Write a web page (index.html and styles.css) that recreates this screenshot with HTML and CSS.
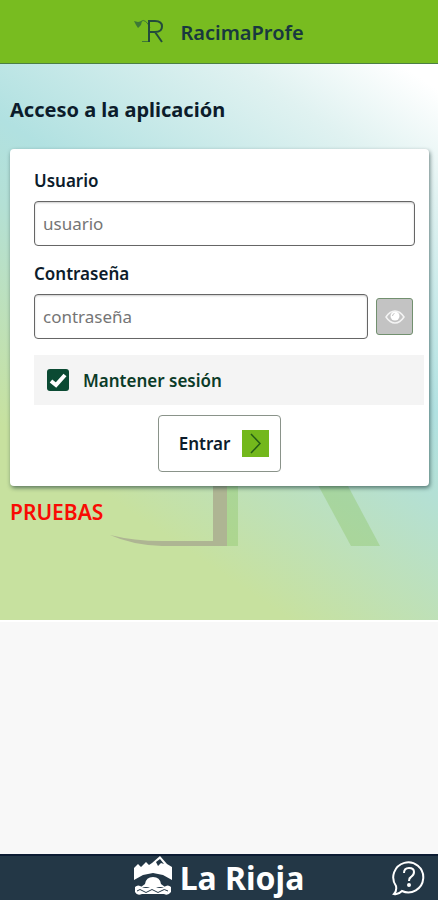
FILE: index.html
```html
<!DOCTYPE html>
<html lang="es">
<head>
    <meta charset="utf-8" />
    <meta name="viewport" content="width=device-width, initial-scale=1" />
    <title>RacimaProfe</title>
    <link rel="stylesheet" href="styles.css">
</head>
<body>
    <header class="top-bar">
        <svg class="logo" viewBox="0 0 30 24" aria-hidden="true">
            <path class="logo-leaf" d="M0 2L4 3L8 2L7 6L4 9L2 6z" />
            <path class="logo-stem" d="M5 5Q9 -2 14 5L16 9M8 22.500H16" />
            <path class="logo-letter" d="M15 23V2H21Q28 2 28 7.500Q28 13 21 13H15M21 13L28 23" />
        </svg>
        <span class="app-name">RacimaProfe</span>
    </header>

    <main class="login">
        <svg class="watermark" viewBox="0 0 270 200" aria-hidden="true">
            <path class="mark-shadow" d="M117 0H128V200H117z M160 50H190L270 200H241z" />
            <path class="mark-stroke" d="M103 0H117V200H52Q22 199 0 189Q24 195 52 195H103z" />
        </svg>
        <h1>Acceso a la aplicación</h1>
        <form class="card">
            <label class="field-label" for="usuario">Usuario</label>
            <div class="field">
                <input class="text-box" type="text" id="usuario" placeholder="usuario" />
            </div>
            <label class="field-label" for="clave">Contraseña</label>
            <div class="field">
                <input class="text-box" type="password" id="clave" placeholder="contraseña" />
                <button class="show-button" type="button" aria-label="Mostrar contraseña">
                    <svg viewBox="0 0 20 14" aria-hidden="true">
                        <path d="M1 7Q5 1 10 1Q15 1 19 7Q15 13 10 13Q5 13 1 7z" fill="none" stroke="#f4f4f4" stroke-width="1.500" />
                        <circle cx="10" cy="6" r="4.500" fill="#fff" />
                        <path d="M7.500 6Q7.500 4 9.500 3.500" fill="none" stroke="#c3c3c3" />
                    </svg>
                </button>
            </div>
            <label class="keep">
                <input type="checkbox" checked />
                <span>Mantener sesión</span>
            </label>
            <button class="enter-button" type="submit">
                <span>Entrar</span>
                <svg viewBox="0 0 27 27" aria-hidden="true">
                    <path d="M0 0H27V27H0z" fill="#73b81c" />
                    <path d="M9 4L18 13.500L9 23" fill="none" stroke="#245c16" stroke-width="1.500" />
                </svg>
            </button>
        </form>
        <p class="environment">PRUEBAS</p>
    </main>

    <footer class="bottom-bar">
        <div class="brand">
            <svg viewBox="0 0 38 40" aria-hidden="true">
                <path d="M0 12L4 8L7 11L12 6L15 9L18 7L26 0L33 8L38 11V24L29 19L19 17L9 19L0 24z" fill="#fff" />
                <path d="M22 6L26 3L30 8L27 7L24 10z" fill="#233746" />
                <path d="M11 28Q12 21 19 21Q26 21 27 28L31 31H7z" fill="#fff" />
                <path d="M1 31Q4 28 8 31Q12 33 16 31Q19 29 22 31Q26 33 30 31Q34 28 37 31V36Q34 40 30 38H8Q3 40 1 36z" fill="#fff" />
                <path d="M3 35Q6 32 9 35T15 35T21 35T27 35T34 35" fill="none" stroke="#233746" />
            </svg>
            <span>La Rioja</span>
        </div>
        <a class="help" href="#" aria-label="Ayuda">
            <svg viewBox="0 0 36 36" aria-hidden="true">
                <path d="M5 26A15 15 0 1 1 11 31Q7 35 3 34Q6 31 5 26z" />
                <path d="M13 13Q13 8 18 8Q23 8 23 12Q23 15 20 17Q18 18 18 21" />
                <circle cx="18" cy="25" r="1" />
            </svg>
        </a>
    </footer>
</body>
</html>
```
FILE: styles.css
```css
* {
    box-sizing: border-box;
}

body {
    display: flex;
    flex-direction: column;
    min-height: 100vh;
    margin: 0;
    background-color: #f8f8f8;
    color: #0c1c2b;
    font-family: "Noto Sans", sans-serif;
    font-size: 17px;
    font-weight: 600;
}

button,
input {
    font: inherit;
    color: inherit;
}

.top-bar {
    display: flex;
    align-items: center;
    justify-content: center;
    gap: 16px;
    height: 64px;
    padding-top: 2px;
    border-bottom: 1px solid #4c7f45;
    background-color: #78bc20;
}

.logo {
    width: 30px;
    height: 24px;
    margin-bottom: 4px;
}

.logo path {
    fill: none;
    stroke: #234b3c;
}

.logo .logo-leaf {
    fill: #3d7836;
    stroke: none;
}

.logo .logo-stem {
    stroke: #3d7836;
}

.logo .logo-letter {
    stroke-width: 2;
}

.app-name {
    color: #18383f;
    font-size: 20px;
    line-height: 28px;
}

.login {
    position: relative;
    padding: 32px 9px 92px 10px;
    border-bottom: 2px solid #fff;
    background-image: linear-gradient(34deg, #c7e19f 0%, #c7e19f 23%, #b4e0d5 49%, #b1e1e1 59%, #e0f2f1 84%, #fff 97%);
}

.watermark {
    position: absolute;
    bottom: 74px;
    left: 25%;
    width: 270px;
    height: 200px;
}

.mark-shadow {
    fill: #8cc66a;
    opacity: 0.4;
}

.mark-stroke {
    fill: #aeb593;
}

h1 {
    margin: 0 0 25px;
    font-size: 20px;
    font-weight: 700;
    line-height: 28px;
}

.card {
    position: relative;
    display: flex;
    flex-direction: column;
    padding: 20px 5px 14px 24px;
    border-radius: 4px;
    background-color: #fff;
    box-shadow: 1px 2px 4px rgba(20, 50, 50, 0.6);
}

.field-label {
    line-height: 24px;
}

.field {
    display: flex;
    align-items: center;
    gap: 8px;
    margin: 8px 9px 16px 0;
}

.text-box {
    flex: 1;
    min-width: 0;
    height: 45px;
    padding: 0 8px;
    border: 1px solid #666;
    border-radius: 4px;
    background-color: #fff;
    font-weight: 400;
    box-shadow: inset 0 1px 2px rgba(0, 0, 0, 0.2);
}

.text-box::placeholder {
    color: #757575;
}

.show-button {
    display: flex;
    align-items: center;
    justify-content: center;
    width: 37px;
    height: 37px;
    margin-right: 2px;
    padding: 0;
    border: 1px solid #72906f;
    border-radius: 3px;
    background-color: #c3c3c3;
}

.show-button svg {
    width: 20px;
    height: 14px;
}

.keep {
    display: flex;
    align-items: center;
    gap: 14px;
    height: 50px;
    padding-left: 13px;
    background-color: #f4f4f4;
    color: #0b3b28;
}

.keep input {
    appearance: none;
    width: 22px;
    height: 22px;
    margin: 0;
    border-radius: 3px;
    background-color: #0b4a33;
}

.keep input:checked {
    background-image: url("data:image/svg+xml,%3Csvg xmlns='http://www.w3.org/2000/svg' viewBox='0 0 22 22'%3E%3Cpath d='M4 12L9 16L18 6' fill='none' stroke='white' stroke-width='4'/%3E%3C/svg%3E");
}

.enter-button {
    display: flex;
    align-items: center;
    align-self: center;
    gap: 12px;
    height: 57px;
    margin: 10px 19px 0 0;
    padding: 0 11px 0 20px;
    border: 1px solid #8a938a;
    border-radius: 4px;
    background-color: #fff;
}

.enter-button svg {
    width: 27px;
    height: 27px;
}

.environment {
    position: relative;
    margin: 10px 0 0;
    color: #f90b04;
    font-size: 21px;
    line-height: 32px;
}

.bottom-bar {
    position: relative;
    display: flex;
    align-items: center;
    justify-content: center;
    height: 46px;
    margin-top: auto;
    border-top: 2px solid #0c1c33;
    background-color: #233746;
    color: #fff;
}

.brand {
    display: flex;
    align-items: center;
    gap: 8px;
    font-size: 32px;
    font-weight: 700;
    line-height: 40px;
}

.brand svg {
    width: 38px;
    height: 40px;
    margin-bottom: 4px;
}

.help {
    position: absolute;
    right: 11px;
}

.help svg {
    display: block;
    width: 36px;
    height: 36px;
    fill: none;
    stroke: #fff;
    stroke-width: 2;
}
```
